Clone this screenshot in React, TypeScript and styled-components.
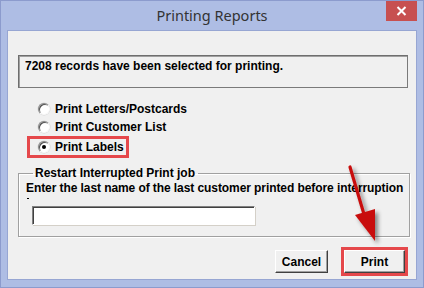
import React from "react";
import styled, { createGlobalStyle } from "styled-components";

const GlobalStyle = createGlobalStyle`
    html, body {
        margin: 0;
        padding: 0;
        background: #aebde4;
    }
`

const options = [
    { label: "Print Letters/Postcards", checked: false },
    { label: "Print Customer List", checked: false },
    { label: "Print Labels", checked: true, marked: true },
];

const App = () => {
    return (
        <>
            <GlobalStyle />
            <Window>
                <TitleBar>
                    <Title>Printing Reports</Title>
                    <CloseButton>
                        <svg width="11" height="10" viewBox="0 0 11 10">
                            <path d="M1.5 1 L9.5 9 M9.5 1 L1.5 9" stroke="#fff" strokeWidth="2" />
                        </svg>
                    </CloseButton>
                </TitleBar>
                <Client>
                    <MessageBox>7208 records have been selected for printing.</MessageBox>
                    <RadioList>
                        {options.map(opt => (
                            <RadioRow key={opt.label} marked={!!opt.marked}>
                                <Radio checked={opt.checked} />
                                <span>{opt.label}</span>
                            </RadioRow>
                        ))}
                    </RadioList>
                    <Group>
                        <Legend>Restart Interrupted Print job</Legend>
                        <Label>Enter the last name of the last customer printed before interruption</Label>
                        <Cut />
                        <TextInput />
                    </Group>
                    <ButtonRow>
                        <Button>Cancel</Button>
                        <Marked>
                            <Button wide>Print</Button>
                        </Marked>
                    </ButtonRow>
                </Client>
                <Arrow width="40" height="90" viewBox="0 0 40 90">
                    <defs>
                        <filter id="sh" x="-50%" y="-50%" width="200%" height="200%">
                            <feDropShadow dx="3" dy="3" stdDeviation="2" floodColor="#000" floodOpacity="0.45" />
                        </filter>
                    </defs>
                    <g filter="url(#sh)">
                        <path d="M5 2 L21 56" stroke="#c8100f" strokeWidth="3.2" strokeLinecap="round" />
                        <path d="M10 50 L30 44 L30 76 Z" fill="#c8100f" />
                    </g>
                </Arrow>
            </Window>
        </>
    );
};

const Window = styled.div`
    position: relative;
    width: 424px;
    height: 288px;
    box-sizing: border-box;
    border: 1px solid #8c9bcd;
    background: #aebde4;
    display: flex;
    flex-direction: column;
    font-family: "Liberation Sans", Arial, sans-serif;
    overflow: hidden;
`

const TitleBar = styled.div`
    height: 29px;
    display: flex;
    justify-content: center;
    align-items: center;
    position: relative;
`

const Title = styled.div`
    font-family: "Noto Sans", "Open Sans", sans-serif;
    font-size: 14.5px;
    color: #333;
    margin-top: -2px;
`

const CloseButton = styled.div`
    position: absolute;
    top: 0;
    right: 6px;
    width: 31px;
    height: 20px;
    background: #c75050;
    display: flex;
    align-items: center;
    justify-content: center;
`

const Client = styled.div`
    margin: 0 6px 0 6px;
    height: 250px;
    box-sizing: border-box;
    border: 1px solid #97a6d3;
    background: #f0f0f0;
    display: flex;
    flex-direction: column;
    font-size: 12px;
    font-weight: bold;
    color: #000;
`

const MessageBox = styled.div`
    margin: 24px 0 0 10px;
    width: 390px;
    height: 33px;
    box-sizing: border-box;
    border: 1px solid #6e6e6e;
    border-right-color: #7a7a7a;
    border-bottom-color: #7a7a7a;
    box-shadow: inset 1px 1px #a0a0a0;
    padding: 3px 0 0 6px;
    line-height: 14px;
`

const RadioList = styled.div`
    margin: 12px 0 0 21px;
    display: flex;
    flex-direction: column;
    align-items: flex-start;
`

const RadioRow = styled.div<{ marked: boolean }>`
    height: 18px;
    display: flex;
    align-items: center;
    gap: 5px;
    padding: 0 3px 0 9px;
    margin-top: ${props => props.marked ? "2px" : "0"};
    outline: ${props => props.marked ? "3px solid #e5484b" : "none"};
    outline-offset: -1px;
`

const Radio = styled.span<{ checked: boolean }>`
    position: relative;
    width: 12px;
    height: 12px;
    box-sizing: border-box;
    border-radius: 50%;
    border: 1px solid;
    border-color: #8a8a8a #f8f8f8 #f8f8f8 #8a8a8a;
    background: #fff;
    box-shadow: inset 1px 1px #505050, 0 0 0 0.5px #d6d6d6;
    &::after {
        content: "";
        display: ${props => props.checked ? "block" : "none"};
        position: absolute;
        left: 3px;
        top: 3px;
        width: 4px;
        height: 4px;
        border-radius: 50%;
        background: #000;
    }
`

const Group = styled.fieldset`
    margin: 10px 0 0 10px;
    width: 392px;
    box-sizing: border-box;
    padding: 0 0 11px 7px;
    border: 1px solid #a0a0a0;
    box-shadow: inset 1px 1px #fff, 1px 1px #fff;
    min-width: 0;
`

const Legend = styled.legend`
    margin-left: 7px;
    padding: 0 3px 0 2px;
    line-height: 14px;
    font-size: 12px;
`

const Label = styled.div`
    line-height: 14px;
    white-space: nowrap;
    margin-top: 1px;
    letter-spacing: -0.08px;
`

const Cut = styled.div`
    width: 2px;
    height: 1px;
    background: #000;
    margin: 3px 0 0 1px;
`

const TextInput = styled.input`
    display: block;
    margin: 7px 0 0 6px;
    width: 223px;
    height: 19px;
    box-sizing: border-box;
    background: #fff;
    border: 1px solid;
    border-color: #808080 #fff #fff #808080;
    box-shadow: inset 1px 1px #404040, 1px 1px #d4d0c8;
    outline: none;
`

const ButtonRow = styled.div`
    margin: 10px 8px 0 0;
    display: flex;
    justify-content: flex-end;
    align-items: center;
    gap: 13px;
`

const Marked = styled.div`
    border: 3px solid #e5484b;
    display: flex;
`

const Button = styled.button<{ wide?: boolean }>`
    width: ${props => props.wide ? "61px" : "53px"};
    height: 23px;
    box-sizing: border-box;
    padding: 0;
    font-family: "Liberation Sans", Arial, sans-serif;
    font-size: 12px;
    font-weight: bold;
    color: #000;
    background: #f0f0f0;
    border: 1px solid;
    border-color: #fff #404040 #404040 #fff;
    box-shadow: inset -1px -1px #a0a0a0;
`

const Arrow = styled.svg`
    position: absolute;
    left: 344px;
    top: 164px;
    overflow: visible;
`

export default App;
